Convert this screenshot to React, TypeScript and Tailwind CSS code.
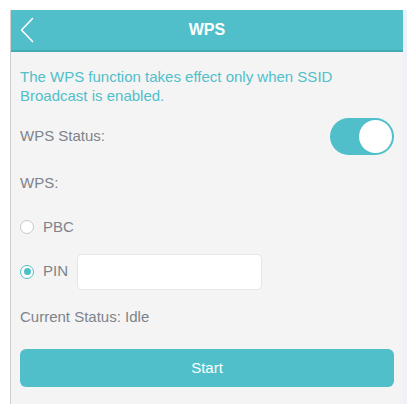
import React, { useState } from "react";

const Radio = ({ checked }: { checked: boolean }) => (
  <span
    className={`flex h-[14px] w-[14px] items-center justify-center rounded-full border ${
      checked ? "border-[#4fbfca]" : "border-[#c8c8c8]"
    } bg-white`}
  >
    {checked && <span className="h-[7px] w-[7px] rounded-full bg-[#4fbfca]" />}
  </span>
);

const App = () => {
  const [mode, setMode] = useState<"pbc" | "pin">("pin");

  return (
    <div className="h-[414px] w-[416px] bg-white p-[10px] pr-[9px] font-['Liberation_Sans',Arial,sans-serif]">
      <div className="flex h-[394px] flex-col border-l border-[#cfcfcf] border-r-[4px] border-r-[#eef1fa] bg-[#f4f4f4]">
        <header className="relative flex h-[42px] items-center justify-center border-b-[2px] border-[#46aab4] bg-[#50bfca]">
          <svg className="absolute left-[9px] top-[7px]" width="14" height="26" viewBox="0 0 14 26" fill="none">
            <path d="M12.5 1.5 1.5 13l11 11.5" stroke="#fff" strokeWidth="1.6" strokeLinecap="round" strokeLinejoin="round" />
          </svg>
          <h1 className="text-[16px] font-bold text-white">WPS</h1>
        </header>

        <div className="flex flex-col px-[9px] text-[15px] text-[#7d838b]">
          <p className="mt-[15px] leading-[19px] text-[#50bfca]">
            The WPS function takes effect only when SSID Broadcast is enabled.
          </p>

          <div className="mt-[13px] flex items-center justify-between">
            <span>WPS Status:</span>
            <button className="flex h-[37px] w-[64px] items-center justify-end rounded-full bg-[#50bfca] px-[2px]">
              <span className="h-[33px] w-[33px] rounded-full bg-white" />
            </button>
          </div>

          <div className="mt-[19px] leading-[18px]">WPS:</div>

          <button className="mt-[24px] flex items-center gap-[9px]" onClick={() => setMode("pbc")}>
            <Radio checked={mode === "pbc"} />
            <span>PBC</span>
          </button>

          <div className="mt-[15px] flex items-center gap-[9px]">
            <button className="flex items-center gap-[9px]" onClick={() => setMode("pin")}>
              <Radio checked={mode === "pin"} />
              <span>PIN</span>
            </button>
            <input className="h-[36px] w-[185px] rounded-[5px] border border-[#e6e6e6] bg-white px-2 outline-none" />
          </div>

          <div className="mt-[16px]">Current Status: Idle</div>

          <button className="mt-[21px] h-[38px] w-full rounded-[6px] bg-[#50bfca] text-[15px] text-white">Start</button>
        </div>
      </div>
    </div>
  );
};

export default App;
